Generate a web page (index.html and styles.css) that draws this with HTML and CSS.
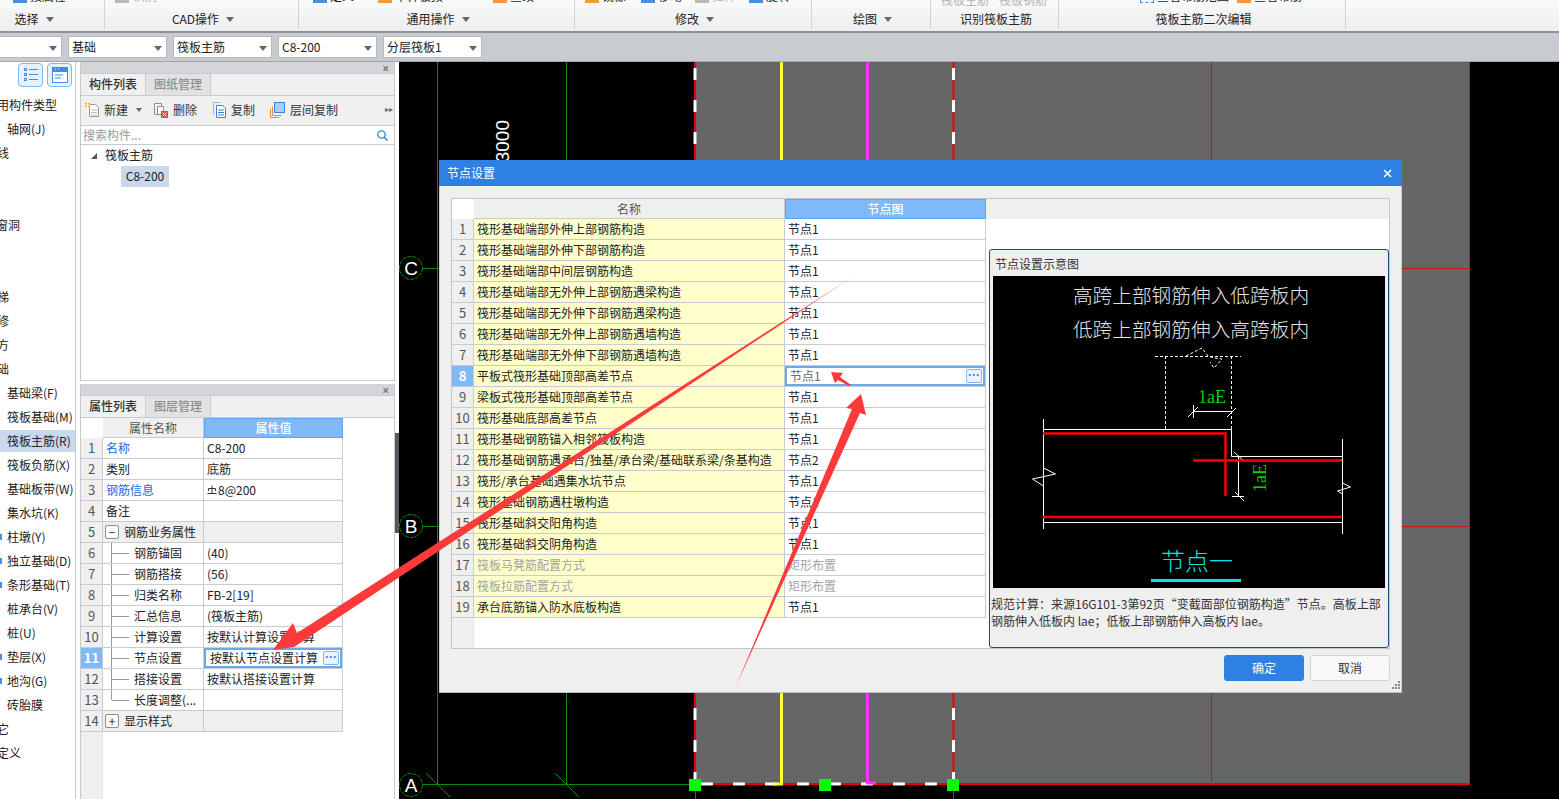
FILE: index.html
```html
<!DOCTYPE html>
<html lang="zh-CN">
<head>
<meta charset="utf-8">
<title>节点设置</title>
<link rel="stylesheet" href="styles.css">
</head>
<body>
<header class="ribbon">
  <section class="rb g1">
    <div class="rb-top"><i class="ic ic-blue at13"></i><span class="rt">按属性选择</span></div>
    <div class="rb-label">选择<b class="caret"></b></div>
  </section>
  <section class="rb g2">
    <div class="rb-top"><i class="ic ic-gray at10"></i><span class="rt muted">识别</span></div>
    <div class="rb-label">CAD操作<b class="caret"></b></div>
  </section>
  <section class="rb g3">
    <div class="rb-top"><i class="ic ic-blue at14"></i><span class="rt">定义</span><i class="ic ic-orange at24"></i><span class="rt">平齐板顶</span><i class="ic ic-orange at50"></i><span class="rt">查改</span></div>
    <div class="rb-label">通用操作<b class="caret"></b></div>
  </section>
  <section class="rb g4">
    <div class="rb-top"><i class="ic ic-orange at10"></i><span class="rt">镜像</span><i class="ic ic-blue at15"></i><span class="rt">移动</span><i class="ic ic-gray at13"></i><span class="rt muted">拉伸</span><i class="ic ic-blue at13"></i><span class="rt">旋转</span></div>
    <div class="rb-label">修改<b class="caret"></b></div>
  </section>
  <section class="rb g5">
    <div class="rb-top"></div>
    <div class="rb-label">绘图<b class="caret"></b></div>
  </section>
  <section class="rb g6">
    <div class="rb-top low"><span class="rt muted at10">筏板主筋</span><span class="rt muted at10">筏板钢筋</span></div>
    <div class="rb-label">识别筏板主筋</div>
  </section>
  <section class="rb g7">
    <div class="rb-top"><i class="ic ic-dash at80"></i><span class="rt">查看布筋范围</span><i class="ic ic-orange at8"></i><span class="rt">查看布筋</span></div>
    <div class="rb-label">筏板主筋二次编辑</div>
  </section>
  <section class="rb g8"></section>
</header>

<div class="combos">
  <div class="combo c0"><b class="caret"></b></div>
  <div class="combo">基础<b class="caret"></b></div>
  <div class="combo">筏板主筋<b class="caret"></b></div>
  <div class="combo">C8-200<b class="caret"></b></div>
  <div class="combo">分层筏板1<b class="caret"></b></div>
</div>

<main class="main">
  <nav class="nav">
    <div class="nav-top">
      <button class="nav-btn"><svg width="16" height="14" viewBox="0 0 16 14"><g fill="none" stroke="#3d8ee6"><rect x="1.5" y=".5" width="2" height="2"/><rect x="1.5" y="5.5" width="2" height="2"/><rect x="1.5" y="10.5" width="2" height="2"/><path d="M6 1.5h9M6 6.5h9M6 11.5h9"/></g></svg></button>
      <button class="nav-btn"><svg width="16" height="16" viewBox="0 0 16 16"><rect x=".5" y=".5" width="15" height="15" fill="#fff" stroke="#3d8ee6"/><rect x="1" y="1" width="14" height="4" fill="#3d8ee6"/><path d="M3 8h8M3 11h6" stroke="#3d8ee6"/><path d="M3 2h1M6 2h1" stroke="#fff"/></svg></button>
    </div>
    <ul class="nav-list">
      <li class="l1">常用构件类型</li>
      <li class="l2">轴网(J)</li>
      <li class="l1">轴线</li>
      <li></li><li></li>
      <li class="l1 l1b">门窗洞</li>
      <li></li><li></li>
      <li class="l1">楼梯</li>
      <li class="l1">装修</li>
      <li class="l1">土方</li>
      <li class="l1">基础</li>
      <li class="l2">基础梁(F)</li>
      <li class="l2">筏板基础(M)</li>
      <li class="l2 on">筏板主筋(R)</li>
      <li class="l2">筏板负筋(X)</li>
      <li class="l2">基础板带(W)</li>
      <li class="l2">集水坑(K)</li>
      <li class="l2 mk">柱墩(Y)</li>
      <li class="l2 mk">独立基础(D)</li>
      <li class="l2 mk">条形基础(T)</li>
      <li class="l2">桩承台(V)</li>
      <li class="l2">桩(U)</li>
      <li class="l2 mk">垫层(X)</li>
      <li class="l2 mk">地沟(G)</li>
      <li class="l2">砖胎膜</li>
      <li class="l1">其它</li>
      <li class="l1 l1c">自定义</li>
    </ul>
  </nav>

  <div class="panels">
    <section class="panel p1">
      <div class="p-title"><span class="p-x">×</span></div>
      <div class="tabs"><span class="tab on">构件列表</span><span class="tab">图纸管理</span></div>
      <div class="tools">
        <span class="tool t-new"><svg width="15" height="16" viewBox="0 0 15 16"><path d="M4.5 2.5h6l3 3v9h-9z" fill="#fff" stroke="#9a9a9a"/><path d="M6 8h6M6 10.5h6M6 13h6" stroke="#bbb"/><path d="M0 1h5v4H0z" fill="#f5a623"/><path d="M2.5 0v6M0 3h5" stroke="#fff"/></svg>新建<b class="caret"></b></span>
        <span class="tool t-del"><svg width="15" height="16" viewBox="0 0 15 16"><path d="M1.5 1.5h7v11h-7z" fill="#f4f4f4" stroke="#8d8d8d"/><path d="M4.5 4.5h6v8h-6z" fill="#fff" stroke="#8d8d8d"/><rect x="8" y="9" width="7" height="7" fill="#d9453f"/><path d="M9.5 10.5l4 4M13.5 10.5l-4 4" stroke="#fff"/></svg>删除</span>
        <span class="tool t-cpy"><svg width="13" height="16" viewBox="0 0 13 16"><path d="M3.5 3.5h6l3 3v9h-9z" fill="#fff" stroke="#3d85d8"/><path d="M.5 12.5V.5h7" fill="none" stroke="#8fb9e8"/><path d="M5 8h6M5 10.5h6M5 13h6" stroke="#3d85d8"/></svg>复制</span>
        <span class="tool t-lay"><svg width="15" height="16" viewBox="0 0 15 16"><path d="M.5 15.5V6.5M.5 15.5h9" fill="none" stroke="#ef8a35"/><path d="M2.5 13.5V4.5M2.5 13.5h9" fill="none" stroke="#ef8a35"/><rect x="4.5" y=".5" width="10" height="10" fill="#a9cdf5" stroke="#3d85d8"/></svg>层间复制</span>
        <span class="more">▸▸</span>
      </div>
      <div class="search"><span>搜索构件...</span><svg width="11" height="11" viewBox="0 0 11 11"><circle cx="4.5" cy="4.5" r="3.7" fill="none" stroke="#2f86d8" stroke-width="1.3"/><path d="M7.2 7.2l3.3 3.3" stroke="#2f86d8" stroke-width="1.5"/></svg></div>
      <div class="tree">
        <div class="tree-root"><i class="tri"></i>筏板主筋</div>
        <div class="tree-leaf">C8-200</div>
      </div>
    </section>

    <section class="panel p2">
      <div class="p-title"><span class="p-x">×</span></div>
      <div class="tabs"><span class="tab on">属性列表</span><span class="tab">图层管理</span></div>
      <div class="prop-wrap">
        <table class="grid prop">
          <colgroup><col class="pc0"><col class="pc1"><col class="pc2"></colgroup>
          <tr class="hd"><td class="blank"></td><td class="hn">属性名称</td><td class="hv">属性值</td></tr>
          <tr><td class="n">1</td><td class="lnk">名称</td><td>C8-200</td></tr>
          <tr><td class="n">2</td><td>类别</td><td>底筋</td></tr>
          <tr><td class="n">3</td><td class="lnk">钢筋信息</td><td><svg class="rebar" width="10" height="11" viewBox="0 0 10 11"><path d="M1.5 6V3.5h7V6M5 .5v8M.5 8.5h9" fill="none" stroke="#333"/></svg>8@200</td></tr>
          <tr><td class="n">4</td><td>备注</td><td></td></tr>
          <tr class="grp"><td class="n">5</td><td class="gname"><i class="exp">−</i>钢筋业务属性</td><td></td></tr>
          <tr><td class="n">6</td><td class="ch">钢筋锚固</td><td>(40)</td></tr>
          <tr><td class="n">7</td><td class="ch">钢筋搭接</td><td>(56)</td></tr>
          <tr><td class="n">8</td><td class="ch">归类名称</td><td>FB-2[19]</td></tr>
          <tr><td class="n">9</td><td class="ch">汇总信息</td><td>(筏板主筋)</td></tr>
          <tr><td class="n">10</td><td class="ch">计算设置</td><td>按默认计算设置计算</td></tr>
          <tr class="sel"><td class="n">11</td><td class="ch">节点设置</td><td class="edit">按默认节点设置计算<i class="dots">···</i></td></tr>
          <tr><td class="n">12</td><td class="ch">搭接设置</td><td>按默认搭接设置计算</td></tr>
          <tr><td class="n">13</td><td class="ch last">长度调整(...</td><td></td></tr>
          <tr class="grp"><td class="n">14</td><td class="gname"><i class="exp">+</i>显示样式</td><td></td></tr>
        </table>
        <div class="gutter"></div>
      </div>
    </section>
    <div class="handle"></div>
  </div>

  <div class="canvas">
    <svg class="cad" viewBox="399 62 1160 737" width="1160" height="737">
      <rect x="695" y="62" width="775" height="723" fill="#666"/>
      <g stroke="#0a8a0a" fill="none">
        <path d="M437.5 62V785M566.5 62V785M399 268.5H439M399 526.5H439M423 784.5H689M426 773l24 24M555 773l24 24M695.5 791V799M953.5 791V799"/>
      </g>
      <g fill="#000" stroke="#0a8a0a" stroke-dasharray="4 1">
        <circle cx="411" cy="268" r="11.5"/>
        <circle cx="411" cy="526" r="11.5"/>
        <circle cx="411" cy="785" r="11.5"/>
      </g>
      <g class="cad-axis">
        <text x="411" y="275">C</text>
        <text x="411" y="533">B</text>
        <text x="411" y="792">A</text>
      </g>
      <text class="cad-dim" transform="translate(509 120) rotate(-90)">3000</text>
      <path d="M1211.5 62V785M1469.5 62V785M1402 268.5H1469M1402 526.5H1469" stroke="#c81414" fill="none"/>
      <path d="M695 62V785M953.5 62V785M695 784H1470" stroke="#f00000" stroke-width="2" fill="none"/>
      <path d="M695 68V785M953.5 68V785M701 784H953" stroke="#fff" stroke-width="3" stroke-dasharray="12 20" fill="none"/>
      <path d="M781.5 62V784H773" stroke="#ffff33" stroke-width="3" fill="none"/>
      <path d="M867.5 62V783H876" stroke="#ff33ff" stroke-width="3" fill="none"/>
      <rect x="689" y="779" width="12" height="12" fill="#0f0"/>
      <rect x="819" y="779" width="12" height="12" fill="#0f0"/>
      <rect x="947" y="779" width="12" height="12" fill="#0f0"/>
    </svg>
  </div>
</main>

<section class="dialog">
  <header class="dlg-head"><span>节点设置</span><svg width="9" height="9" viewBox="0 0 9 9"><path d="M1 1l7 7M8 1l-7 7" stroke="#fff" stroke-width="1.5"/></svg></header>
  <div class="dlg-body">
    <div class="dlg-grid">
      <div class="dlg-left">
        <table class="grid nodes">
          <colgroup><col class="nc0"><col class="nc1"><col class="nc2"></colgroup>
          <tr class="hd"><td class="blank"></td><td class="hn">名称</td><td class="hv">节点图</td></tr>
          <tr><td class="n">1</td><td class="y">筏形基础端部外伸上部钢筋构造</td><td>节点1</td></tr>
          <tr><td class="n">2</td><td class="y">筏形基础端部外伸下部钢筋构造</td><td>节点1</td></tr>
          <tr><td class="n">3</td><td class="y">筏形基础端部中间层钢筋构造</td><td>节点1</td></tr>
          <tr><td class="n">4</td><td class="y">筏形基础端部无外伸上部钢筋遇梁构造</td><td>节点1</td></tr>
          <tr><td class="n">5</td><td class="y">筏形基础端部无外伸下部钢筋遇梁构造</td><td>节点1</td></tr>
          <tr><td class="n">6</td><td class="y">筏形基础端部无外伸上部钢筋遇墙构造</td><td>节点1</td></tr>
          <tr><td class="n">7</td><td class="y">筏形基础端部无外伸下部钢筋遇墙构造</td><td>节点1</td></tr>
          <tr class="sel"><td class="n">8</td><td class="y">平板式筏形基础顶部高差节点</td><td class="edit soft">节点1<i class="dots">···</i></td></tr>
          <tr><td class="n">9</td><td class="y">梁板式筏形基础顶部高差节点</td><td>节点1</td></tr>
          <tr><td class="n">10</td><td class="y">筏形基础底部高差节点</td><td>节点1</td></tr>
          <tr><td class="n">11</td><td class="y">筏形基础钢筋锚入相邻筏板构造</td><td>节点1</td></tr>
          <tr><td class="n">12</td><td class="y">筏形基础钢筋遇承台/独基/承台梁/基础联系梁/条基构造</td><td>节点2</td></tr>
          <tr><td class="n">13</td><td class="y">筏形/承台基础遇集水坑节点</td><td>节点1</td></tr>
          <tr><td class="n">14</td><td class="y">筏形基础钢筋遇柱墩构造</td><td>节点1</td></tr>
          <tr><td class="n">15</td><td class="y">筏形基础斜交阳角构造</td><td>节点1</td></tr>
          <tr><td class="n">16</td><td class="y">筏形基础斜交阴角构造</td><td>节点1</td></tr>
          <tr class="off"><td class="n">17</td><td class="y">筏板马凳筋配置方式</td><td>矩形布置</td></tr>
          <tr class="off"><td class="n">18</td><td class="y">筏板拉筋配置方式</td><td>矩形布置</td></tr>
          <tr><td class="n">19</td><td class="y">承台底筋锚入防水底板构造</td><td>节点1</td></tr>
        </table>
        <div class="gutter"></div>
      </div>
      <div class="dlg-right">
        <div class="right-head"></div>
        <div class="right-gap"></div>
        <div class="box">
          <div class="box-cap">节点设置示意图</div>
          <svg class="pic" width="392" height="312" viewBox="0 0 392 312">
            <rect width="392" height="312" fill="#000"/>
            <text class="pic-t" x="198" y="27">高跨上部钢筋伸入低跨板内</text>
            <text class="pic-t" x="198" y="61">低跨上部钢筋伸入高跨板内</text>
            <path d="M162 80.5H248M172.5 80V153M238.5 80V153M193 80l16-8 6 8 6 2 8 1-8 9-4-6" stroke="#fff" stroke-dasharray="3 2" fill="none"/>
            <path d="M50.5 143V253M349.5 163V258M50 153.5H238.5V180.5H349M50 246.5H349.5M50.5 192l12 6-23 5 11 7M349.5 207l8 4-13 4 5 3M200 135.5H238.5M200.5 129V142M195 141l10-10M234 141l9-9M245.5 181V221M239 220.5H251M241 176l10 9M242 216l9 9" stroke="#fff" fill="none"/>
            <path d="M50 157.5H232.5V220M200 184.5H349M50 241H349" stroke="#f00" stroke-width="2.4" fill="none"/>
            <text class="pic-g" x="205" y="127">1aE</text>
            <text class="pic-g" transform="translate(273 216) rotate(-90)">1aE</text>
            <text class="pic-c" x="204" y="294">节点一</text>
            <rect x="158" y="303" width="90" height="3" fill="#00e5e5"/>
          </svg>
          <p class="box-note">规范计算：来源16G101-3第92页“变截面部位钢筋构造”节点。高板上部钢筋伸入低板内 lae；低板上部钢筋伸入高板内 lae。</p>
        </div>
      </div>
    </div>
    <div class="dlg-foot">
      <button class="btn pri">确定</button>
      <button class="btn">取消</button>
    </div>
    <svg class="grip" width="9" height="9" viewBox="0 0 9 9"><path d="M7 0h2v2H7zM4 3h2v2H4zM7 3h2v2H7zM1 6h2v2H1zM4 6h2v2H4zM7 6h2v2H7z" fill="#888"/></svg>
  </div>
</section>

<svg class="arrows" width="1559" height="799" viewBox="0 0 1559 799">
  <defs>
    <linearGradient id="fade" gradientUnits="userSpaceOnUse" x1="780" y1="323" x2="866" y2="268">
      <stop offset="0" stop-color="#fd3a3a"/>
      <stop offset="1" stop-color="#fd3a3a" stop-opacity=".1"/>
    </linearGradient>
  </defs>
  <polygon points="273,650 293,623 297,633 866,268 300,643 294,647" fill="url(#fade)"/>
  <polygon points="861,394 846,408 852,409 736,686 860,413 866,415" fill="#fd3a3a"/>
  <polygon points="831,372 843,373 840,377 851,385 849,386 838,380 835,383" fill="#fd3a3a"/>
</svg>
</body>
</html>
```

FILE: styles.css
```css
* { box-sizing: border-box; }
html, body { margin: 0; padding: 0; }
body {
  position: relative;
  width: 1559px;
  height: 799px;
  overflow: hidden;
  background: #fff;
  color: #222;
  font: 12px/16px "Noto Sans CJK SC", "Noto Sans", sans-serif;
  display: flex;
  flex-direction: column;
}
i, b { font-style: normal; font-weight: normal; }

/* ribbon */
.ribbon {
  flex: none;
  height: 33px;
  display: flex;
  background: linear-gradient(#f9fafa, #eceeef);
  border-bottom: 2px solid #8f9296;
  overflow: hidden;
}
.rb { flex: none; border-right: 1px solid #d0d3d6; height: 29px; }
.g1 { width: 105px; padding-right: 39px; }
.g2 { width: 194px; }
.g3 { width: 276px; }
.g4 { width: 237px; }
.g5 { width: 119px; }
.g6 { width: 128px; }
.g7 { width: 287px; }
.g8 { flex: 1; border-right: 0; }
.rb-top {
  height: 8px;
  display: flex;
  align-items: flex-end;
  overflow: hidden;
  white-space: nowrap;
}
.rt { margin-bottom: 4px; flex: none; color: #222; }
.rt.muted { color: #b5b5b5; }
.rb-top.low .rt { margin-bottom: 0; }
.ic { flex: none; width: 14px; height: 14px; margin: 0 3px 5px 0; display: block; }
.ic-blue { background: #4a8fdc; }
.ic-gray { background: #b8b8b8; }
.ic-orange { background: #ef9a3c; }
.ic-dash { border: 1px dashed #3d85d8; }
.at8 { margin-left: 8px; }
.at10 { margin-left: 10px; }
.at13 { margin-left: 13px; }
.at14 { margin-left: 14px; }
.at15 { margin-left: 15px; }
.at24 { margin-left: 24px; }
.at50 { margin-left: 50px; }
.at80 { margin-left: 81px; }
.g2 .rb-top .ic { margin-right: 4px; }
.rb-label {
  height: 22px;
  line-height: 22px;
  padding-left: 3px;
  text-align: center;
  white-space: nowrap;
}
.caret {
  display: inline-block;
  width: 0;
  height: 0;
  margin-left: 7px;
  vertical-align: 2px;
  border: 4px solid transparent;
  border-top: 5px solid #666;
  border-bottom: 0;
}

/* combos */
.combos {
  flex: none;
  height: 29px;
  background: #c8cbd0;
  border-bottom: 1px solid #a3a6aa;
  padding-top: 3px;
  display: flex;
  gap: 6px;
}
.combo {
  flex: none;
  position: relative;
  width: 99px;
  height: 22px;
  line-height: 20px;
  padding-left: 3px;
  background: #fff;
  border: 1px solid #b5b8bd;
  font-size: 12px;
}
.combo.c0 { width: 62px; border-left: 0; }
.combo .caret {
  position: absolute;
  right: 4px;
  top: 9px;
  margin: 0;
}

/* main */
.main { flex: 1; display: flex; min-height: 0; }
.nav {
  flex: none;
  width: 76px;
  border-right: 1px solid #c5c8cd;
  overflow: hidden;
  white-space: nowrap;
}
.nav-top {
  height: 28px;
  padding: 1px 3px 0 18px;
  display: flex;
  gap: 4px;
}
.nav-btn {
  width: 25px;
  height: 24px;
  padding: 0;
  display: flex;
  align-items: center;
  justify-content: center;
  background: #e6f1fd;
  border: 1px solid #7db8f2;
  border-radius: 4px;
}
.nav-list { list-style: none; margin: 3px 0 0; padding: 0; }
.nav-list li { position: relative; height: 24px; line-height: 24px; }
.l1 { margin-left: -15px; }
.l1b { margin-left: -16px; }
.l1c { margin-left: -15px; }
.l2 { padding-left: 7px; }
.nav-list .on { background: linear-gradient(#fff 0 1px, #c9d8ed 1px 23px, #fff 23px); }
.nav-list .mk::before {
  content: "";
  position: absolute;
  left: 0;
  top: 9px;
  width: 2px;
  height: 6px;
  background: #4a8fdc;
}

.panels {
  flex: none;
  position: relative;
  width: 323px;
  padding: 0 4px;
  display: flex;
  flex-direction: column;
  gap: 3px;
}
.panel {
  display: flex;
  flex-direction: column;
  border: 1px solid #c5c8cd;
  border-top: 0;
  background: #fff;
  min-height: 0;
}
.p1 { height: 319px; }
.p2 { flex: 1; border-bottom: 0; }
.p-title {
  flex: none;
  height: 11px;
  background: #d3d5d9;
  text-align: right;
  line-height: 11px;
  padding-right: 5px;
}
.p-x { color: #7b7b7b; font: bold 12px/11px "Noto Sans", sans-serif; }
.tabs {
  flex: none;
  height: 23px;
  display: flex;
  background: #f0f0f0;
  border-top: 1px solid #c8cbd0;
  border-bottom: 1px solid #c8cbd0;
}
.tab {
  width: 65px;
  text-align: center;
  line-height: 20px;
  color: #8e8e8e;
  background: #e2e2e2;
  font-weight: 500;
  border-right: 1px solid #c8cbd0;
}
.tab.on { color: #333; background: #f0f0f0; }
.tools {
  flex: none;
  position: relative;
  height: 30px;
  padding-bottom: 2px;
  display: flex;
  align-items: center;
  background: #f0f0f0;
  border-bottom: 1px solid #c8cbd0;
  white-space: nowrap;
  color: #333;
}
.tool { display: flex; align-items: center; gap: 5px; }
.t-new { margin-left: 4px; gap: 4px; }
.t-new .caret { margin-left: 4px; border-width: 3px; border-top-width: 4px; border-bottom-width: 0; }
.t-del { margin-left: 11px; }
.t-cpy { margin-left: 16px; }
.t-lay { margin-left: 15px; }
.more { position: absolute; right: 1px; top: 6px; font: 8px/16px "DejaVu Sans", sans-serif; color: #666; }
.search {
  flex: none;
  height: 19px;
  padding: 0 6px 0 2px;
  display: flex;
  align-items: center;
  justify-content: space-between;
  color: #9a9a9a;
  border-bottom: 1px solid #c8cbd0;
}
.tree { flex: 1; }
.tree-root { height: 21px; line-height: 20px; padding-left: 24px; position: relative; }
.tri {
  position: absolute;
  left: 10px;
  top: 8px;
  width: 0;
  height: 0;
  border-left: 6px solid transparent;
  border-bottom: 6px solid #555;
}
.tree-leaf {
  margin-left: 40px;
  width: 48px;
  height: 21px;
  line-height: 20px;
  text-align: center;
  background: #c9d8ed;
}
.handle {
  position: absolute;
  right: 0;
  top: 371px;
  width: 4px;
  height: 100px;
  background: #565a60;
}

/* grids */
.grid {
  border-collapse: separate;
  border-spacing: 0;
  table-layout: fixed;
  flex: none;
}
.grid td {
  height: 21px;
  padding: 0 0 0 3px;
  border-right: 1px solid #c8ccd2;
  border-bottom: 1px solid #c8ccd2;
  white-space: nowrap;
  overflow: hidden;
  line-height: 16px;
}
.grid .hd td { height: 20px; text-align: center; color: #555; background: #efefef; padding: 0; }
.grid .hd .blank { background: #fff; border: 0; }
.grid .hd .hv {
  background: #7fb9f8;
  color: #fff;
  font-weight: 500;
  border: 1px solid #5ea6ee;
}
.grid td.n {
  padding: 0;
  text-align: center;
  color: #555;
  background: #efefef;
  font-size: 13px;
}
.grid .sel td.n { background: #7fb9f8; color: #fff; font-weight: bold; }
.grid td.edit {
  position: relative;
  padding-left: 6px;
  box-shadow: inset 0 0 0 2px #6aa9ea;
}
.grid td.soft { color: #666; padding-left: 5px; }
.dots {
  position: absolute;
  right: 3px;
  top: 3px;
  width: 16px;
  height: 14px;
  font: bold 12px/10px "Liberation Sans", sans-serif;
  text-align: center;
  color: #3d85d8;
  background: #eaf3fd;
  border: 1px solid #7db8f2;
  border-radius: 2px;
}
.prop-wrap { flex: 1; display: flex; flex-direction: column; min-height: 0; }
.prop { width: 262px; }
.pc0 { width: 22px; }
.pc1 { width: 101px; }
.pc2 { width: 139px; }
.lnk { color: #2a66e0; }
.rebar { vertical-align: -0.5px; margin-right: 1px; }
.grid .grp td { background: #efefef; }
.gname { position: relative; }
.grid td.gname { padding-left: 21px; }
.exp {
  position: absolute;
  left: 2px;
  top: 3px;
  width: 14px;
  height: 14px;
  line-height: 11px;
  text-align: center;
  background: #fafafa;
  border: 1px solid #8e8e8e;
  border-radius: 2px;
  color: #333;
}
.grid td.ch { position: relative; padding-left: 31px; }
.ch::before {
  content: "";
  position: absolute;
  left: 8px;
  top: -1px;
  height: 22px;
  border-left: 1px solid #999;
}
.ch::after {
  content: "";
  position: absolute;
  left: 9px;
  top: 10px;
  width: 17px;
  border-top: 1px solid #999;
}
.ch.last::before { height: 11px; }
.gutter { flex: 1; width: 22px; background: #efefef; border-right: 1px solid #e4e4e4; }

/* canvas */
.canvas { flex: 1; position: relative; background: #000; overflow: hidden; margin-left: 0; }
.cad { display: block; }
.cad-axis text {
  fill: #fff;
  font: 19px "Liberation Sans", sans-serif;
  text-anchor: middle;
}
.cad-dim {
  fill: #fff;
  font: 19px "Liberation Sans", sans-serif;
  text-anchor: end;
}

/* dialog */
.dialog {
  position: absolute;
  left: 439px;
  top: 160px;
  width: 963px;
  height: 533px;
  display: flex;
  flex-direction: column;
  background: #efefef;
  border-bottom: 1px solid #b9bcc2;
}
.dlg-head {
  flex: none;
  height: 26px;
  padding: 0 10px 0 8px;
  display: flex;
  align-items: center;
  justify-content: space-between;
  color: #fff;
  background: #2e80e2;
}
.dlg-body { flex: 1; position: relative; padding: 12px 12px 0; border-left: 1px solid #c8cbd0; border-right: 1px solid #c8cbd0; }
.dlg-grid {
  display: flex;
  width: 939px;
  height: 451px;
  margin-left: -1px;
  background: #fff;
  border: 1px solid #c3c6cb;
}
.dlg-left { flex: none; width: 534px; display: flex; flex-direction: column; }
.nodes { width: 534px; }
.nc0 { width: 22px; }
.nc1 { width: 311px; }
.nc2 { width: 201px; }
.grid td.y { background: #ffffcc; color: #222; }
.grid .off td.y, .grid .off td:last-child { color: #a3a3a3; }
.dlg-right { flex: 1; display: flex; flex-direction: column; min-width: 0; }
.right-head { height: 20px; background: #efefef; }
.right-gap { height: 30px; }
.box {
  flex: 1;
  width: 400px;
  margin-left: 3px;
  padding: 0 2px 0 3px;
  background: #efefef;
  border: 1px solid #1f4a80;
  border-radius: 3px;
}
.box-cap { height: 26px; line-height: 28px; padding-left: 2px; color: #333; }
.pic { display: block; }
.pic-t {
  fill: #e6e6e6;
  font: 300 19.7px "Noto Sans CJK SC", sans-serif;
  text-anchor: middle;
}
.pic-g { fill: #00d200; font: 18px "Liberation Serif", serif; }
.pic-c {
  fill: #00e5e5;
  font: 300 24px "Noto Sans CJK SC", sans-serif;
  text-anchor: middle;
}
.box-note { margin: 7px -1px 0 -2px; line-height: 17px; color: #333; }
.dlg-foot {
  height: 33px;
  padding-top: 6px;
  display: flex;
  justify-content: flex-end;
  gap: 6px;
  margin-right: -1px;
}
.btn {
  width: 80px;
  height: 26px;
  padding: 0;
  font: inherit;
  color: #333;
  background: #f8f8f8;
  border: 1px solid #cfd2d6;
  border-radius: 3px;
}
.btn.pri { color: #fff; background: #2e80e2; border-color: #2e80e2; }
.grip { position: absolute; right: 1px; bottom: 2px; }
.arrows { position: absolute; left: 0; top: 0; pointer-events: none; }
```
